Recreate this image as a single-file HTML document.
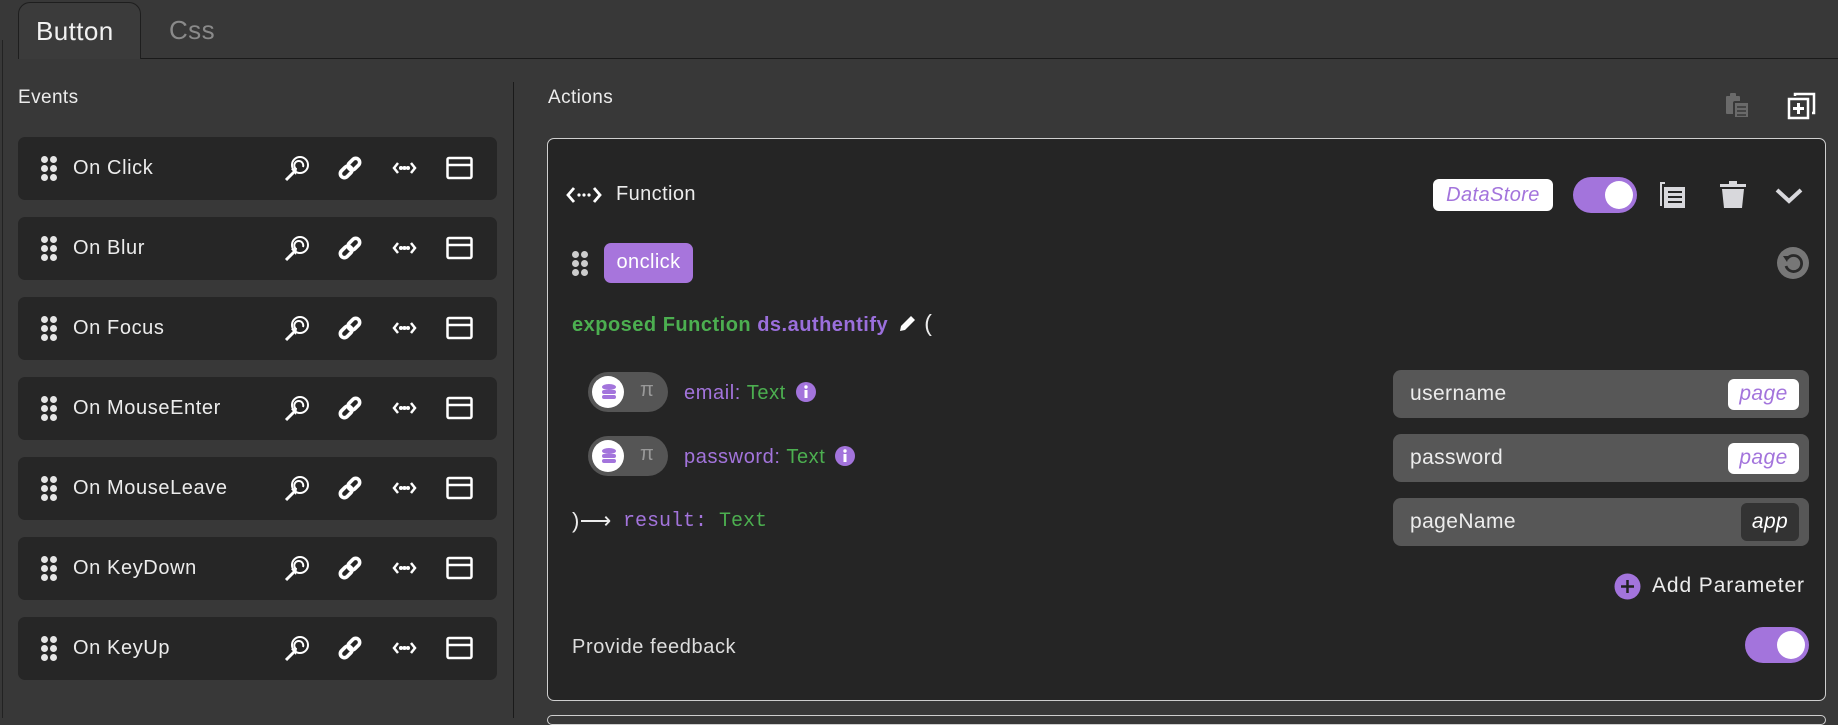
<!DOCTYPE html>
<html><head><meta charset="utf-8"><style>
*{box-sizing:border-box;margin:0;padding:0}
body{width:1838px;height:718px;background:#383838;font-family:"Liberation Sans",sans-serif;color:#ececec;position:relative;overflow:hidden;letter-spacing:0.4px}
.abs{position:absolute}
.tab{left:18px;top:2px;width:123px;height:57px;border:1px solid #1e1e1e;border-bottom:none;border-radius:12px 12px 0 0;background:#3b3b3b;font-size:26px;padding:13px 0 0 17px;color:#f2f2f2}
.row{position:absolute;left:18px;width:479px;height:63px;background:#262626;border-radius:7px}
.dots{position:absolute;width:16px;height:26px}
.dots i{position:absolute;width:7px;height:7px;border-radius:50%;background:#e6e6e6}
.ic{position:absolute}
.inp{position:absolute;left:1393px;width:416px;height:48px;background:#575757;border-radius:8px;font-size:21px;padding:12px 0 0 17px}
.badge{position:absolute;right:10px;top:9px;width:71px;height:31px;background:#fff;border-radius:6px;color:#a374dc;font-style:italic;font-size:21px;text-align:center;line-height:30px}
.tog{position:absolute;width:64px;height:36px;border-radius:18px;background:#a374dc}
.tog i{position:absolute;right:4px;top:4px;width:28px;height:28px;border-radius:50%;background:#fff}
.pt{position:absolute;left:588px;width:80px;height:40px;border-radius:20px;background:#555}
.pt i{position:absolute;left:4px;top:4px;width:32px;height:32px;border-radius:50%;background:#fff}
.pt span{position:absolute;left:52px;top:7px;color:#999;font-size:20px}
.info{display:inline-block;vertical-align:-3px;margin-left:10px}
</style></head><body>
<div class="abs" style="left:2px;top:40px;width:1px;height:678px;background:#222"></div>
<div class="abs" style="left:140px;top:58px;width:1698px;height:1px;background:#1a1a1a"></div>
<div class="abs tab">Button</div>
<div class="abs" style="left:169px;top:15px;font-size:26px;color:#8a8a8a">Css</div>
<div class="abs" style="left:18px;top:87px;font-size:19px">Events</div>
<div class="abs" style="left:513px;top:82px;width:1px;height:636px;background:#1a1a1a"></div>

<svg width="0" height="0" style="position:absolute"><defs>
<g id="mag" fill="none" stroke="#fff" stroke-width="2"><circle cx="17" cy="10" r="8"/><path d="M13 14 A4.5 4.5 0 1 1 20 12"/><path d="M3 25 L12 16" stroke-width="3"/><path d="M8 14 L14 13 L13 20Z" fill="#fff" stroke="none"/></g>
<g id="lnk" fill="none" stroke="#fff" stroke-width="3.6" stroke-linecap="round" transform="rotate(-45 13 13)"><rect x="1" y="9" width="13" height="8" rx="4"/><rect x="12" y="9" width="13" height="8" rx="4"/></g>
<g id="cod" fill="none" stroke="#fff" stroke-width="2.5"><path d="M7 8 L3 13 L7 18"/><path d="M20 8 L24 13 L20 18"/><circle cx="10" cy="13" r=".8" fill="#fff"/><circle cx="13.5" cy="13" r=".8" fill="#fff"/><circle cx="17" cy="13" r=".8" fill="#fff"/></g>
<g id="win" fill="none" stroke="#fff" stroke-width="2.5"><rect x="1.5" y="3" width="24" height="20" rx="1.5"/><path d="M1.5 10 H25.5"/></g>
</defs></svg>

<div class="row" style="top:137px"></div><div class="row" style="top:217px"></div><div class="row" style="top:297px"></div><div class="row" style="top:377px"></div><div class="row" style="top:457px"></div><div class="row" style="top:537px"></div><div class="row" style="top:617px"></div>
<script>
var names=["On Click","On Blur","On Focus","On MouseEnter","On MouseLeave","On KeyDown","On KeyUp"];
var h="";
names.forEach(function(n,i){var y=137+i*80;
h+='<div class="dots" style="left:41px;top:'+(y+19)+'px"><i style="left:0;top:0"></i><i style="left:9px;top:0"></i><i style="left:0;top:9px"></i><i style="left:9px;top:9px"></i><i style="left:0;top:18px"></i><i style="left:9px;top:18px"></i></div>';
h+='<div class="abs" style="left:73px;top:'+(y+20)+'px;font-size:20px;letter-spacing:0.6px">'+n+'</div>';
h+='<svg class="ic" style="left:283px;top:'+(y+18)+'px" width="28" height="28"><use href="#mag"/></svg>';
h+='<svg class="ic" style="left:337px;top:'+(y+18)+'px" width="28" height="28"><use href="#lnk"/></svg>';
h+='<svg class="ic" style="left:391px;top:'+(y+18)+'px" width="28" height="28"><use href="#cod"/></svg>';
h+='<svg class="ic" style="left:446px;top:'+(y+18)+'px" width="28" height="28"><use href="#win"/></svg>';
});
document.write(h);
</script>

<div class="abs" style="left:548px;top:87px;font-size:19px">Actions</div>
<svg class="ic" style="left:1724px;top:92px" width="28" height="28" fill="#6a6a6a"><rect x="2" y="4" width="14" height="18" rx="1"/><rect x="6" y="1" width="6" height="5" rx="1"/><rect x="10" y="10" width="15" height="16" rx="1" stroke="#383838" stroke-width="2"/><path d="M13 15 H22 M13 19 H22 M13 23 H22" stroke="#383838" stroke-width="1.5"/></svg>
<svg class="ic" style="left:1787px;top:91px" width="30" height="30" fill="none" stroke="#fff" stroke-width="2.5"><path d="M8 5 V3 H27 V22 H25"/><rect x="2" y="8" width="19" height="19"/><path d="M11.5 12 V23 M6 17.5 H17" stroke-width="3"/></svg>

<div class="abs" style="left:547px;top:138px;width:1279px;height:563px;border:1px solid #cfcfcf;border-radius:7px;background:#252525"></div>
<div class="abs" style="left:547px;top:715px;width:1279px;height:10px;border:1px solid #cfcfcf;border-radius:7px"></div>

<svg class="ic" style="left:566px;top:182px" width="36" height="26"><g fill="none" stroke="#fff" stroke-width="2.8"><path d="M8 6 L2 13 L8 20"/><path d="M28 6 L34 13 L28 20"/></g><circle cx="13" cy="13" r="1.6" fill="#fff"/><circle cx="18" cy="13" r="1.6" fill="#fff"/><circle cx="23" cy="13" r="1.6" fill="#fff"/></svg>
<div class="abs" style="left:616px;top:183px;font-size:20px">Function</div>
<div class="abs" style="left:1433px;top:179px;width:120px;height:32px;background:#fff;border-radius:6px;color:#a374dc;font-style:italic;font-size:20px;text-align:center;line-height:32px">DataStore</div>
<div class="tog" style="left:1573px;top:177px"><i></i></div>
<svg class="ic" style="left:1658px;top:180px" width="30" height="30" fill="#d8d8dc"><path d="M2 2 H7 V4 H4 V26 H2Z"/><rect x="6" y="7" width="21" height="21"/><path d="M10 12 H24 M10 17 H24 M10 22 H24" stroke="#252525" stroke-width="2"/></svg>
<svg class="ic" style="left:1719px;top:180px" width="28" height="30" fill="#d8d8dc"><rect x="1" y="4" width="26" height="3"/><rect x="10" y="1" width="8" height="4"/><path d="M3 9 H25 L23 28 H5Z"/></svg>
<svg class="ic" style="left:1774px;top:182px" width="30" height="26"><path d="M3 8 L15 19 L27 8" fill="none" stroke="#d8d8dc" stroke-width="4"/></svg>

<div class="dots" style="left:572px;top:251px"><i style="left:0;top:0;background:#ccc"></i><i style="left:9px;top:0;background:#ccc"></i><i style="left:0;top:9px;background:#ccc"></i><i style="left:9px;top:9px;background:#ccc"></i><i style="left:0;top:18px;background:#ccc"></i><i style="left:9px;top:18px;background:#ccc"></i></div>
<div class="abs" style="left:604px;top:243px;width:89px;height:40px;background:#a775dc;border-radius:7px;font-size:20px;text-align:center;line-height:39px;color:#fff">onclick</div>
<svg class="ic" style="left:1777px;top:247px" width="32" height="32"><circle cx="16" cy="16" r="16" fill="#777"/><path d="M10 12 A8 8 0 1 1 9 19" fill="none" stroke="#2a2a2a" stroke-width="2.8"/><path d="M6 9 L12 9 L10 15Z" fill="#2a2a2a"/></svg>

<div class="abs" style="left:572px;top:310px;font-size:20px;font-weight:bold;white-space:nowrap;letter-spacing:0.5px"><span style="color:#4caf50">exposed Function</span> <span style="color:#9b6fdc">ds.authentify</span> <svg width="20" height="20" style="vertical-align:-2px;margin-left:4px"><path d="M2 18 L3 13 L13 3 L17 7 L7 17Z" fill="#fff"/></svg> <span style="font-weight:normal;font-size:23px">(</span></div>

<div class="pt" style="top:372px"><i></i><span>π</span></div>
<div class="pt" style="top:436px"><i></i><span>π</span></div>
<svg class="ic" style="left:600px;top:383px" width="18" height="18" fill="#a374dc"><ellipse cx="9" cy="4" rx="7" ry="3"/><rect x="2" y="7" width="14" height="4" rx="2"/><rect x="2" y="12" width="14" height="4" rx="2"/></svg>
<svg class="ic" style="left:600px;top:447px" width="18" height="18" fill="#a374dc"><ellipse cx="9" cy="4" rx="7" ry="3"/><rect x="2" y="7" width="14" height="4" rx="2"/><rect x="2" y="12" width="14" height="4" rx="2"/></svg>
<div class="abs" style="left:684px;top:382px;font-size:20px;white-space:nowrap;letter-spacing:0.6px"><span style="color:#a374dc">email:</span> <span style="color:#4caf50">Text</span><svg class="info" width="20" height="20"><circle cx="10" cy="10" r="10" fill="#a374dc"/><rect x="8.5" y="8" width="3" height="8" fill="#fff"/><circle cx="10" cy="5" r="1.7" fill="#fff"/></svg></div>
<div class="abs" style="left:684px;top:446px;font-size:20px;white-space:nowrap;letter-spacing:0.6px"><span style="color:#a374dc">password:</span> <span style="color:#4caf50">Text</span><svg class="info" width="20" height="20"><circle cx="10" cy="10" r="10" fill="#a374dc"/><rect x="8.5" y="8" width="3" height="8" fill="#fff"/><circle cx="10" cy="5" r="1.7" fill="#fff"/></svg></div>

<div class="abs" style="left:572px;top:508px;font-size:22px">)⟶</div>
<div class="abs" style="left:623px;top:510px;font-size:20px;font-family:'Liberation Mono',monospace;letter-spacing:0"><span style="color:#a374dc">result:</span> <span style="color:#4caf50">Text</span></div>

<div class="inp" style="top:370px">username<div class="badge">page</div></div>
<div class="inp" style="top:434px">password<div class="badge">page</div></div>
<div class="inp" style="top:498px">pageName<div class="badge" style="background:#333;color:#fff;top:5px;width:58px;height:38px;line-height:38px">app</div></div>

<svg class="ic" style="left:1614px;top:573px" width="27" height="27"><circle cx="13.5" cy="13.5" r="13" fill="#a374dc"/><path d="M13.5 7 V20 M7 13.5 H20" stroke="#222" stroke-width="2.5"/></svg>
<div class="abs" style="left:1652px;top:574px;font-size:21px;letter-spacing:0.9px">Add Parameter</div>
<div class="abs" style="left:572px;top:636px;font-size:20px;color:#ddd;letter-spacing:0.6px">Provide feedback</div>
<div class="tog" style="left:1745px;top:627px"><i></i></div>
</body></html>
